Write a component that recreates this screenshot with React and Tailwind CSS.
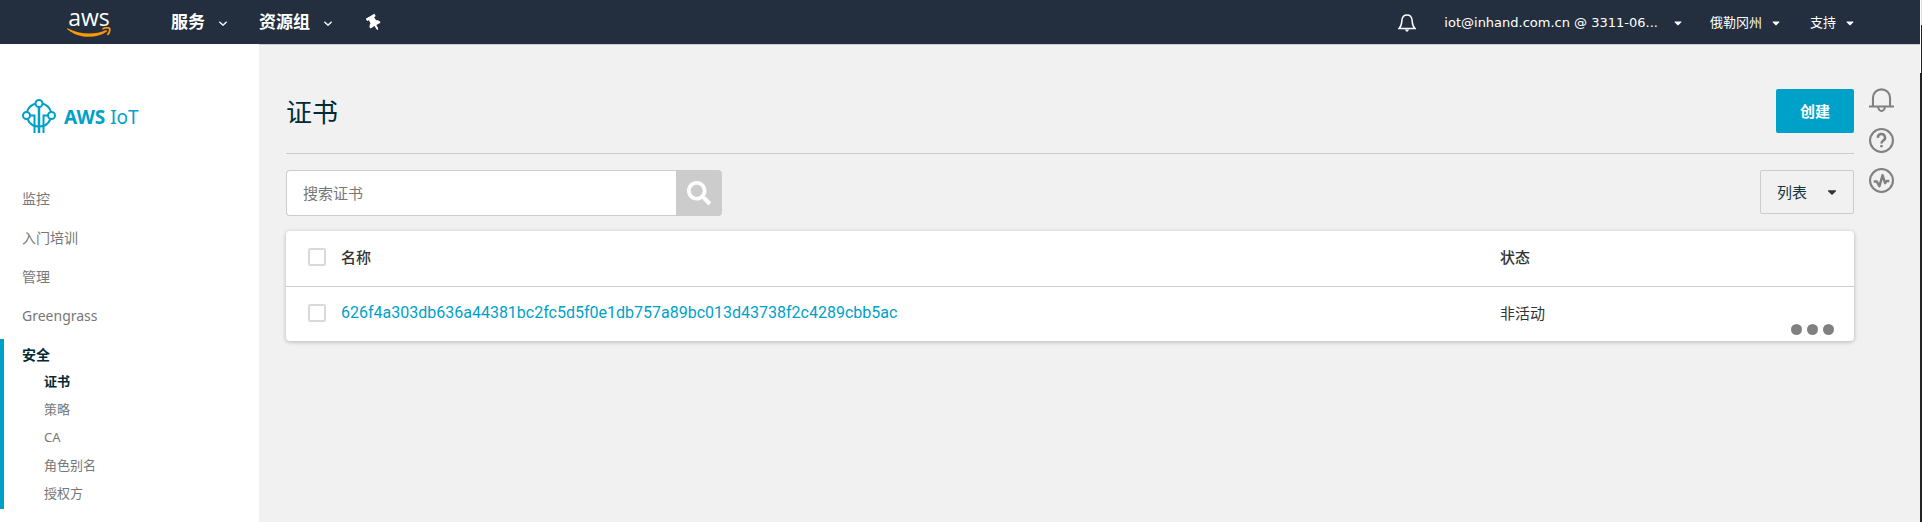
import { FaThumbtack, FaSearch, FaCaretDown } from "react-icons/fa";
import { RxChevronDown } from "react-icons/rx";

const sans = "font-['Noto_Sans','Noto_Sans_CJK_SC',sans-serif]";
const navFont = "font-['DejaVu_Sans','Noto_Sans_CJK_SC',sans-serif]";

const navItems = ["监控", "入门培训", "管理", "Greengrass"];
const subItems = ["证书", "策略", "CA", "角色别名", "授权方"];

function AwsLogo() {
  return (
    <a href="#home" aria-label="AWS" className="flex w-[50px] flex-col items-center">
      <span className="font-['Open_Sans',sans-serif] text-[23px] leading-[18px] font-medium text-white">aws</span>
      <svg viewBox="0 0 44 11" className="mt-px h-[11px] w-11" fill="#f90" aria-hidden="true">
        <path d="M0.500 1.200C12 7.500 28 8.200 38.500 3.300C39.800 2.800 40.600 3.900 39.500 4.800C29 12.200 11 11.500 0.300 2.200C-.2 1.700 0 1 .5 1.200Z" />
        <path d="M35.500 1.800C38 .8 41.500.6 42.500 1.500C43.200 3 42 6 40.500 7.800" fill="none" stroke="#f90" strokeWidth="1.800" />
      </svg>
    </a>
  );
}

function IotLogo() {
  return (
    <svg viewBox="0 0 34 34" className="size-[34px]" fill="none" stroke="#00a1c9" strokeWidth="2" aria-hidden="true">
      <circle cx="17" cy="4.500" r="3.500" />
      <circle cx="4.500" cy="16.500" r="3.500" />
      <circle cx="29.500" cy="16.500" r="3.500" />
      <path d="M13.500 4.500A13 13 0 0 0 4.900 13M20.500 4.500A13 13 0 0 1 29.100 13" />
      <path d="M5.500 20A12.500 12.500 0 0 0 28.500 20" />
      <path d="M17 8V34" strokeWidth="2.500" />
      <path d="M12.500 34V16.500H8M21.500 34V16.500H26" />
    </svg>
  );
}

function BellIcon({ className, strokeWidth }) {
  return (
    <svg viewBox="0 0 24 24" className={className} fill="none" stroke="currentColor" strokeWidth={strokeWidth} aria-hidden="true">
      <path d="M3.800 17.500V9.500A8.200 8.200 0 0 1 20.200 9.500V17.500M0 17.800H24M8.800 18A3.200 4 0 0 0 15.200 18" />
    </svg>
  );
}

function Checkbox({ label }) {
  return (
    <input
      type="checkbox"
      aria-label={label}
      className="block size-[18px] appearance-none rounded-xs border-2 border-[#d9d9d9] bg-white checked:bg-[#00a1c9]"
    />
  );
}

export default function App() {
  return (
    <div className={`flex min-h-screen bg-[#f1f1f1] ${sans}`}>
      <div className="flex min-w-0 flex-1 flex-col">
        <header className={`flex h-11 shrink-0 items-center justify-between bg-[#232f3e] px-16 pt-px text-white ${navFont}`}>
          <nav className="flex items-center" aria-label="全局">
            <AwsLogo />
            <button type="button" className="ml-[57px] flex items-center gap-3 text-[17px] font-bold">
              服务 <RxChevronDown className="size-3" strokeWidth={1} />
            </button>
            <button type="button" className="ml-[30px] flex items-center gap-3 text-[17px] font-bold">
              资源组 <RxChevronDown className="size-3" strokeWidth={1} />
            </button>
            <button type="button" aria-label="固定" className="ml-8">
              <FaThumbtack className="size-4 -rotate-30" />
            </button>
          </nav>
          <div className="flex items-center text-[13px]">
            <button type="button" aria-label="通知" className="mr-7">
              <svg viewBox="0 0 18 20" className="h-5 w-[18px]" fill="none" stroke="white" strokeWidth="1.500" aria-hidden="true">
                <path d="M1 15.500C4 13 3.500 10 4 6.500C4.500 3.500 6.500 2 9 2S13.500 3.500 14 6.500C14.500 10 14 13 17 15.500Z" />
                <path d="M6.500 16.500H11.500L9 19Z" fill="white" stroke="none" />
              </svg>
            </button>
            <button type="button" className="flex items-center gap-[14px]">
              iot@inhand.com.cn @ 3311-06... <FaCaretDown className="size-3" />
            </button>
            <button type="button" className="ml-[26px] flex items-center gap-2">
              俄勒冈州 <FaCaretDown className="size-3" />
            </button>
            <button type="button" className="ml-7 flex items-center gap-2">
              支持 <FaCaretDown className="size-3" />
            </button>
          </div>
        </header>

        <div className="flex flex-1">
          <aside className="w-[259px] shrink-0 bg-white pt-[55px]">
            <a href="#iot" className="flex items-center gap-2 pl-[22px] text-[19px] leading-8 text-[#00a1c9]">
              <IotLogo />
              <span className="pt-0.5">
                <b>AWS</b> IoT
              </span>
            </a>
            <nav className="pt-[46px] text-sm text-[#777]" aria-label="IoT">
              <ul>
                {navItems.map((t) => (
                  <li key={t}>
                    <a href={`#${t}`} className="flex h-[39px] items-center pl-[22px]">{t}</a>
                  </li>
                ))}
                <li className="mt-1 border-l-4 border-[#00a1c9] pb-0.5 pl-[18px]">
                  <a href="#安全" className="flex h-7 items-center pt-1 font-bold text-[#002b36]">安全</a>
                  <ul className="pl-[22px] text-[13px]">
                    {subItems.map((t, i) => (
                      <li key={t}>
                        <a href={`#${t}`} className={i === 0 ? "flex h-7 items-center font-bold text-[#002b36]" : "flex h-7 items-center"}>{t}</a>
                      </li>
                    ))}
                  </ul>
                </li>
              </ul>
            </nav>
          </aside>

          <main className="min-w-0 flex-1 border-t border-[#ccc] pl-[27px]">
            <div className="flex">
              <div className="min-w-0 flex-1">
                <div className="flex h-[109px] items-center justify-between border-b border-[#ccc] pt-7 pb-1">
                  <h1 className="pt-0.5 text-[26px] font-normal text-[#002b36]">证书</h1>
                  <button type="button" className="h-11 rounded-xs bg-[#00a1c9] px-6 text-[15px] font-bold text-white">创建</button>
                </div>
                <div className="flex items-start justify-between pt-4">
                  <form className="flex h-[46px]" role="search">
                    <input type="search" aria-label="搜索证书" placeholder="搜索证书" className="w-[390px] rounded-l border border-r-0 border-[#ccc] bg-white px-4 text-[15px] text-[#444] placeholder:text-[#777]" />
                    <button type="button" aria-label="搜索" className="flex w-[46px] items-center justify-center rounded-r bg-[#ccc] text-white">
                      <FaSearch className="size-6" />
                    </button>
                  </form>
                  <button type="button" className="flex h-11 items-center gap-[18px] rounded-xs border border-[#ccc] pr-[14px] pl-4 text-[15px] text-[#16363f]">
                    列表 <FaCaretDown className="size-[14px] text-[#333]" />
                  </button>
                </div>
                <div className="mt-[15px] rounded bg-white shadow-[0_1px_4px_rgba(0,0,0,0.25)]">
                  <table className="w-full table-fixed text-left text-[15px] text-[#333]">
                    <thead>
                      <tr className="h-[55px] border-b border-[#ccc]">
                        <th className="w-[55px] pb-0.5 pl-[22px]"><Checkbox label="全选" /></th>
                        <th className="pb-0.5 font-medium">名称</th>
                        <th className="w-[291px] pb-0.5 font-medium">状态</th>
                        <th className="w-[63px]" aria-label="操作" />
                      </tr>
                    </thead>
                    <tbody>
                      <tr className="h-[55px]">
                        <td className="pb-0.5 pl-[22px]"><Checkbox label="选择证书" /></td>
                        <td className="pb-0.5"><a href="#certificate" className="font-['Roboto',sans-serif] text-base text-[#00a1c9]">626f4a303db636a44381bc2fc5d5f0e1db757a89bc013d43738f2c4289cbb5ac</a></td>
                        <td className="pb-0.5">非活动</td>
                        <td className="pt-8">
                          <button type="button" aria-label="更多" className="flex gap-[5px]">
                            <i className="size-[11px] rounded-full bg-[#808080]" />
                            <i className="size-[11px] rounded-full bg-[#808080]" />
                            <i className="size-[11px] rounded-full bg-[#808080]" />
                          </button>
                        </td>
                      </tr>
                    </tbody>
                  </table>
                </div>
              </div>
              <div className="flex w-[66px] flex-col items-start gap-[15px] pt-[43px] pl-[15px] text-[#808080]">
                <button type="button" aria-label="提醒"><BellIcon className="size-[25px]" strokeWidth="2" /></button>
                <button type="button" aria-label="帮助">
                  <svg viewBox="0 0 24 24" className="size-[25px]" fill="none" stroke="currentColor" strokeWidth="2" aria-hidden="true">
                    <circle cx="12" cy="12" r="11" />
                    <path d="M8.600 9.500A3.400 3.400 0 1 1 13.500 12.200C12.400 12.900 12 13.200 12 14.800M12 16.200V18.400" strokeWidth="2.400" />
                  </svg>
                </button>
                <button type="button" aria-label="运行状况">
                  <svg viewBox="0 0 24 24" className="size-[25px]" fill="none" stroke="currentColor" strokeWidth="2.400" aria-hidden="true">
                    <circle cx="12" cy="12" r="11" strokeWidth="2" />
                    <path d="M4.500 13H7.500L10 17.500L13 7L15.500 14.500L17 12.500H19.500" strokeLinejoin="round" />
                  </svg>
                </button>
              </div>
            </div>
          </main>
        </div>
      </div>
      <div className="flex w-[2px] shrink-0 flex-col bg-[#222]">
        <div className="h-[25px] border-l border-white bg-[#deded8]" />
        <div className="h-12 border-l border-white" />
      </div>
    </div>
  );
}
